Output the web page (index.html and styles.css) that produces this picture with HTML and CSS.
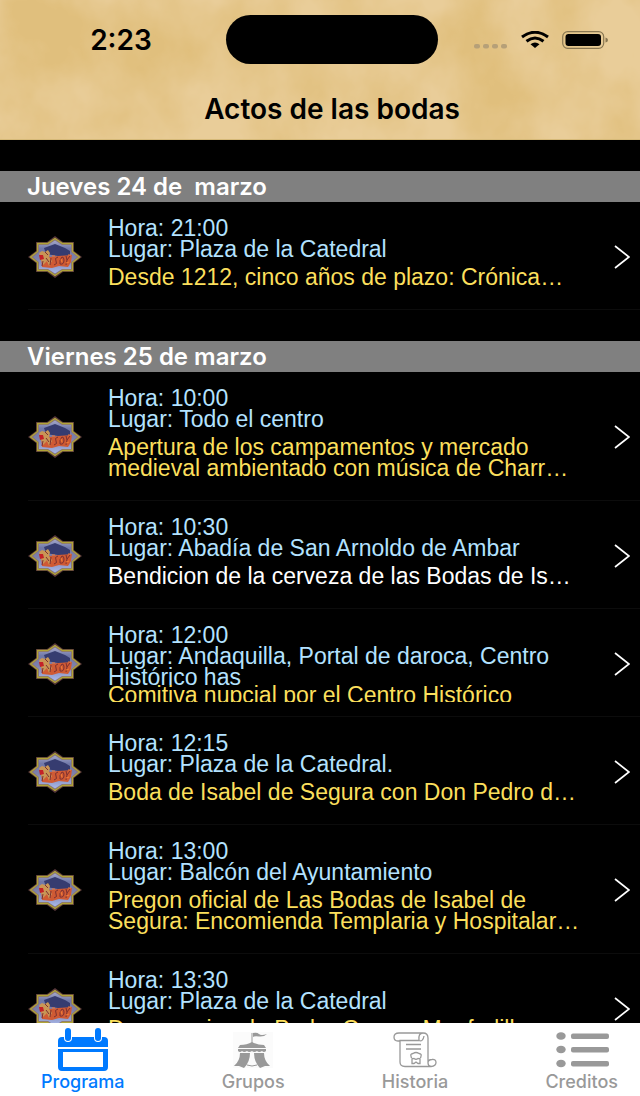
FILE: index.html
```html
<!DOCTYPE html>
<html lang="es">
<head>
<meta charset="utf-8">
<meta name="viewport" content="width=device-width, initial-scale=1">
<title>Actos de las bodas</title>
<link rel="stylesheet" href="styles.css">
</head>
<body>
<svg class="defs" aria-hidden="true">
  <defs>
    <linearGradient id="sky" x1="0" y1="0" x2="0" y2="1">
      <stop offset="0" stop-color="#a4a8cc"/><stop offset=".25" stop-color="#7078a8"/><stop offset=".55" stop-color="#7c80ac"/><stop offset="1" stop-color="#a8b8ea"/>
    </linearGradient>
    <symbol id="badge" viewBox="0 0 54 42">
      <path d="M27 0L35 6H46V15L54 21L46 27V36H35L27 42L19 36H8V27L0 21L8 15V6H19Z" fill="#56363a"/>
      <path d="M27 2.500L34.500 7.500H44.500V15.500L51.500 21L44.500 26.500V34.500H34.500L27 39.500L19.500 34.500H9.500V26.500L2.500 21L9.500 15.500V7.500H19.500Z" fill="#8a7478" stroke="#b0a436" stroke-width="1.300"/>
      <path d="M27 4.500L34 9H43V16L49 21L43 26V33H34L27 37.500L20 33H11V26L5 21L11 16V9H20Z" fill="url(#sky)"/>
      <path d="M16 12L27 8L37 12L42 15V21L30 20L18 18Z" fill="#363c70"/>
      <path d="M13 21L17 18L22 21L30 20L44 19L43 26L40 31L31 30L24 32L14 31Z" fill="#cf5a34"/>
      <path d="M11 17L14 15L17 16L20 14L22 17L21 21L24 25L21 30L19 25L15 29L13 24Z" fill="#c99656"/>
      <path d="M11 19H15L16 23L12 24Z" fill="#c42228"/>
      <path d="M17 16L20 19M18 22L21 26M15 25L14 30M23 22L22 29M30 21Q26 22 28 25T26 29M34 21Q31 24 32 28Q36 29 36 24Q36 21 34 21M38 20L39 24L42 20M39 24L38 29" fill="none" stroke="#7c3030" stroke-width="1"/>
      <path d="M24 20L27 20M33 23L34 26M40 19L43 19M38 27L41 26" stroke="#f07a36" stroke-width="1.200"/>
    </symbol>
    <symbol id="chevron" viewBox="0 0 16 24"><path d="M1 1L15 12L1 23" fill="none" stroke="#fff" stroke-width="1.700"/></symbol>
  </defs>
</svg>
<div class="app">
  <header class="top">
    <svg class="paper" viewBox="0 0 640 140" preserveAspectRatio="none" aria-hidden="true">
      <filter id="blot" x="0" y="0" width="100%" height="100%" color-interpolation-filters="sRGB">
        <feTurbulence type="fractalNoise" baseFrequency=".011 .009" numOctaves="5" seed="5"/>
        <feColorMatrix values="0 0 0 0 .88  0 0 0 0 .75  0 0 0 0 .49  2.400 0 0 0 -.850"/>
      </filter>
      <rect width="640" height="140" filter="url(#blot)"/>
    </svg>
    <div class="status">
      <time class="clock">2:23</time>
      <span class="island"></span>
      <span class="signals">
        <svg width="34" height="6" viewBox="0 0 34 6" fill="#b6a078" aria-hidden="true"><rect x="0" y="1" width="6" height="4.500" rx="2"/><rect x="9" y="1" width="6" height="4.500" rx="2"/><rect x="18" y="1" width="6" height="4.500" rx="2"/><rect x="27" y="1" width="6" height="4.500" rx="2"/></svg>
        <svg width="30" height="18" viewBox="0 0 30 18" aria-hidden="true"><path d="M2 6Q15 -3.500 28 6M6.500 10.300Q15 3.800 23.500 10.300" fill="none" stroke="#000" stroke-width="3"/><path d="M10.500 13.300Q15 9.800 19.500 13.300L15 17Z"/></svg>
        <svg width="46" height="18" viewBox="0 0 46 18" aria-hidden="true"><rect x=".7" y=".7" width="41" height="16.600" rx="5" fill="none" stroke="#897752" stroke-width="1.200"/><rect x="3.500" y="3" width="35.500" height="12" rx="3"/><path d="M43.500 6.500Q46 7 46 9T43.500 11.500Z" fill="#897752"/></svg>
      </span>
    </div>
    <h1 class="title">Actos de las bodas</h1>
  </header>

  <main class="list">
    <section class="day">
      <h2 class="day-name">Jueves 24 de&nbsp; marzo</h2>
      <a class="event" href="#e1">
        <svg class="badge" aria-hidden="true"><use href="#badge"/></svg>
        <span class="body"><span class="info">Hora: 21:00<br>Lugar: Plaza de la Catedral</span><span class="name">Desde 1212, cinco años de plazo: Crónica…</span></span>
        <svg class="chevron" aria-hidden="true"><use href="#chevron"/></svg>
      </a>
    </section>
    <section class="day">
      <h2 class="day-name">Viernes 25 de marzo</h2>
      <a class="event" href="#e2">
        <svg class="badge" aria-hidden="true"><use href="#badge"/></svg>
        <span class="body"><span class="info">Hora: 10:00<br>Lugar: Todo el centro</span><span class="name">Apertura de los campamentos y mercado<br>medieval ambientado con música de Charr…</span></span>
        <svg class="chevron" aria-hidden="true"><use href="#chevron"/></svg>
      </a>
      <a class="event" href="#e3">
        <svg class="badge" aria-hidden="true"><use href="#badge"/></svg>
        <span class="body"><span class="info">Hora: 10:30<br>Lugar: Abadía de San Arnoldo de Ambar</span><span class="name plain">Bendicion de la cerveza de las Bodas de Is…</span></span>
        <svg class="chevron" aria-hidden="true"><use href="#chevron"/></svg>
      </a>
      <a class="event crowded" href="#e4">
        <svg class="badge" aria-hidden="true"><use href="#badge"/></svg>
        <span class="body"><span class="info">Hora: 12:00<br>Lugar: Andaquilla, Portal de daroca, Centro<br>Histórico has</span><span class="name">Comitiva nupcial por el Centro Histórico</span></span>
        <svg class="chevron" aria-hidden="true"><use href="#chevron"/></svg>
      </a>
      <a class="event" href="#e5">
        <svg class="badge" aria-hidden="true"><use href="#badge"/></svg>
        <span class="body"><span class="info">Hora: 12:15<br>Lugar: Plaza de la Catedral.</span><span class="name">Boda de Isabel de Segura con Don Pedro d…</span></span>
        <svg class="chevron" aria-hidden="true"><use href="#chevron"/></svg>
      </a>
      <a class="event" href="#e6">
        <svg class="badge" aria-hidden="true"><use href="#badge"/></svg>
        <span class="body"><span class="info">Hora: 13:00<br>Lugar: Balcón del Ayuntamiento</span><span class="name">Pregon oficial de Las Bodas de Isabel de<br>Segura: Encomienda Templaria y Hospitalar…</span></span>
        <svg class="chevron" aria-hidden="true"><use href="#chevron"/></svg>
      </a>
      <a class="event" href="#e7">
        <svg class="badge" aria-hidden="true"><use href="#badge"/></svg>
        <span class="body"><span class="info">Hora: 13:30<br>Lugar: Plaza de la Catedral</span><span class="name">Desposorios de Pedro Gomez Monfadilla</span></span>
        <svg class="chevron" aria-hidden="true"><use href="#chevron"/></svg>
      </a>
    </section>
  </main>

  <nav class="tabs">
    <a class="tab active" href="#programa" aria-current="page">
      <svg width="52" height="44" viewBox="0 0 52 44" aria-hidden="true"><path d="M5 9H47Q51 9 51 13V19H1V13Q1 9 5 9Z" fill="currentColor"/><path d="M1 21H51V39Q51 43 47 43H5Q1 43 1 39ZM6 24V39H46V24Z" fill="currentColor" fill-rule="evenodd"/><rect x="7" y="-1" width="8" height="15" rx="4" fill="#fff"/><rect x="37" y="-1" width="8" height="15" rx="4" fill="#fff"/><rect x="8" y="0" width="6" height="13" rx="3" fill="currentColor"/><rect x="38" y="0" width="6" height="13" rx="3" fill="currentColor"/></svg>
      Programa
    </a>
    <a class="tab" href="#grupos">
      <svg width="42" height="44" viewBox="0 0 42 44" aria-hidden="true"><rect x="1" y="4" width="40" height="36" fill="#fbfbfb"/><g fill="currentColor"><path d="M19.500 5H20.500V15H19.500ZM21 5Q25 4 27 6T35 6Q32 9 27 8.500T21 9Z"/><path d="M20 14Q25 17 32 17L34 20H6L8 17Q15 17 20 14Z"/><path d="M6 21H34V23Q32 25 30 23Q27 25 25 23Q22 25 20 23Q17 25 15 23Q12 25 10 23Q8 25 6 23Z"/><path d="M8 25H18Q18 34 12 40L7 38L2 38Q8 33 8 25ZM22 25H32Q32 33 38 38L33 38L28 40Q22 34 22 25Z"/></g><path d="M15 37Q20 39 25 37" stroke="currentColor" fill="none"/></svg>
      Grupos
    </a>
    <a class="tab" href="#historia">
      <svg width="44" height="44" viewBox="0 0 44 44" fill="none" stroke="currentColor" stroke-width="1.300" aria-hidden="true"><path d="M7 13V34Q7 38.500 12 38.500H38Q43 38 43 34.500T39 31.500Q35 31.500 35 35Q35 38 38 38.500M35 35V10Q35 5 30 5H6Q1 5 1 9T5 13H7V12.500H26Q25 5 30 5M26 12.500Q30 14 31 8"/><path d="M13 16.500H28M13 21H28"/><path d="M20 25.500Q23 23.500 26 25.500Q29 26 28 28Q28 31 25 30.500Q23 32 21 30.500Q18 31 18 28Q17 26 20 25.500ZM19 31V35.500H21L23 34L25 35.500H27V31"/></svg>
      Historia
    </a>
    <a class="tab" href="#creditos">
      <svg width="54" height="44" viewBox="0 0 54 44" fill="currentColor" aria-hidden="true"><ellipse cx="6" cy="8" rx="4.700" ry="3.800"/><ellipse cx="6" cy="21.500" rx="4.700" ry="3.800"/><ellipse cx="6" cy="35.500" rx="4.700" ry="3.800"/><rect x="16" y="5.500" width="38" height="5.500" rx="2"/><rect x="16" y="19" width="38" height="5.500" rx="2"/><rect x="16" y="33" width="38" height="5.500" rx="2"/></svg>
      Creditos
    </a>
  </nav>
</div>
</body>
</html>
```
FILE: styles.css
```css
* { box-sizing: border-box; }

body {
  margin: 0;
  background: #000;
  font-family: "Liberation Sans", Arial, sans-serif;
}

a { color: inherit; text-decoration: none; }

.defs { position: absolute; width: 0; height: 0; }

.app {
  display: flex;
  flex-direction: column;
  height: 100vh;
}

/* Parchment header */
.top {
  position: relative;
  flex: none;
  padding: 15px 32px 14px 56px;
  background: #e9cd99;
  border-bottom: 1px solid #d6b978;
  color: #000;
  font-family: Inter, sans-serif;
}

.paper {
  position: absolute;
  inset: 0;
  width: 100%;
  height: 100%;
}

.status {
  position: relative;
  display: grid;
  grid-template-columns: 1fr 212px 1fr;
  align-items: center;
}

.clock {
  justify-self: center;
  padding-right: 40px;
  font-size: 28px;
  line-height: 30px;
  font-weight: 600;
}

.island {
  height: 49px;
  border-radius: 25px;
  background: #000;
}

.signals {
  display: flex;
  justify-content: flex-end;
  align-items: center;
  gap: 12px;
}

.signals svg:first-child { margin-top: 12px; }

.title {
  position: relative;
  margin: 30px 0 0;
  font-size: 28px;
  line-height: 31px;
  font-weight: 600;
  text-align: center;
}

/* Programme list */
.list {
  flex: 1;
  min-height: 0;
  overflow-y: auto;
  scrollbar-width: none;
}

.day { padding-top: 31px; }

.day-name {
  margin: 0;
  padding-left: 27px;
  background: #808080;
  color: #fff;
  font-family: Inter, sans-serif;
  font-size: 24px;
  line-height: 31px;
  font-weight: 600;
}

.event {
  display: grid;
  grid-template-columns: 54px 1fr 16px;
  align-items: center;
  column-gap: 26px;
  margin-left: 28px;
  padding: 16px 10px 14px 0;
  border-bottom: 1px solid #0c0c0c;
}

.badge { width: 54px; height: 42px; }
.chevron { width: 16px; height: 24px; }

.body {
  display: flex;
  flex-direction: column;
  gap: 7px;
  min-width: 0;
  padding-bottom: 7px;
  font-size: 23px;
  line-height: 21px;
  white-space: nowrap;
}

.info { color: #b3e2ff; }
.name { color: #fbdf5c; }
.plain { color: #fff; }

.crowded .body {
  display: block;
  height: 77px;
  padding: 0;
  overflow: hidden;
}

.crowded .name {
  display: block;
  margin-top: -3px;
}

/* Tab bar */
.tabs {
  flex: none;
  display: flex;
  justify-content: space-between;
  padding: 5px 22px 5px 41px;
  background: #fff;
}

.tab {
  display: flex;
  flex-direction: column;
  align-items: center;
  gap: 1px;
  color: #999;
  font-family: Inter, sans-serif;
  font-size: 18px;
  line-height: 18px;
  font-weight: 500;
}

.active { color: #007aff; }
```
